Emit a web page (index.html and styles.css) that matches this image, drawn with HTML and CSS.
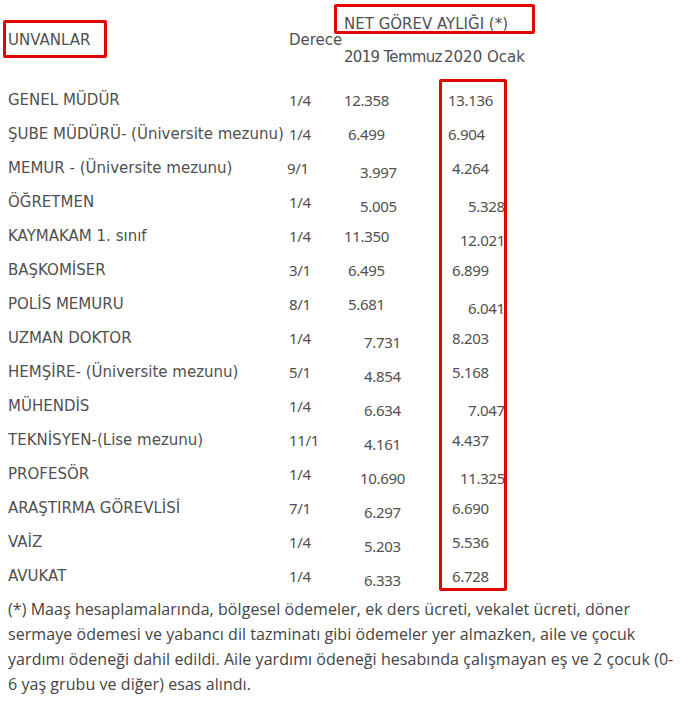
FILE: index.html
```html
<!DOCTYPE html>
<html lang="tr">
<head>
<meta charset="utf-8">
<title>Net Görev Aylığı</title>
<link rel="stylesheet" href="styles.css">
</head>
<body>
<div class="page">
  <div class="head">
    <div class="h-title">UNVANLAR</div>
    <div class="h-derece">Derece</div>
    <div class="h-net">NET GÖREV AYLIĞI (*)</div>
    <div class="h-y1">2019 Temmuz</div>
    <div class="h-y2">2020 Ocak</div>
  </div>
  <div class="rows">
    <div class="t">GENEL MÜDÜR</div><div class="d">1/4</div><div class="n a0">12.358</div><div class="n b4">13.136</div>
    <div class="t">ŞUBE MÜDÜRÜ- (Üniversite mezunu)</div><div class="d">1/4</div><div class="n a4">6.499</div><div class="n b4">6.904</div>
    <div class="t">MEMUR - (Üniversite mezunu)</div><div class="d r">9/1</div><div class="n a16 lo">3.997</div><div class="n b8">4.264</div>
    <div class="t">ÖĞRETMEN</div><div class="d">1/4</div><div class="n a16 lo">5.005</div><div class="n b24 lo">5.328</div>
    <div class="t">KAYMAKAM 1. sınıf</div><div class="d">1/4</div><div class="n a0">11.350</div><div class="n b16 lo">12.021</div>
    <div class="t">BAŞKOMİSER</div><div class="d">3/1</div><div class="n a4">6.495</div><div class="n b8">6.899</div>
    <div class="t">POLİS MEMURU</div><div class="d">8/1</div><div class="n a4">5.681</div><div class="n b24 lo">6.041</div>
    <div class="t">UZMAN DOKTOR</div><div class="d">1/4</div><div class="n a20 lo">7.731</div><div class="n b8">8.203</div>
    <div class="t">HEMŞİRE- (Üniversite mezunu)</div><div class="d">5/1</div><div class="n a20 lo">4.854</div><div class="n b8">5.168</div>
    <div class="t">MÜHENDİS</div><div class="d">1/4</div><div class="n a20 lo">6.634</div><div class="n b24 lo">7.047</div>
    <div class="t">TEKNİSYEN-(Lise mezunu)</div><div class="d">11/1</div><div class="n a20 lo">4.161</div><div class="n b8">4.437</div>
    <div class="t">PROFESÖR</div><div class="d">1/4</div><div class="n a16 lo">10.690</div><div class="n b16 lo">11.325</div>
    <div class="t">ARAŞTIRMA GÖREVLİSİ</div><div class="d">7/1</div><div class="n a20 lo">6.297</div><div class="n b8">6.690</div>
    <div class="t">VAİZ</div><div class="d">1/4</div><div class="n a20 lo">5.203</div><div class="n b8">5.536</div>
    <div class="t">AVUKAT</div><div class="d">1/4</div><div class="n a20 lo">6.333</div><div class="n b8">6.728</div>
  </div>
  <p class="note">(*) Maaş hesaplamalarında, bölgesel ödemeler, ek ders ücreti, vekalet ücreti, döner<br>sermaye ödemesi ve yabancı dil tazminatı gibi ödemeler yer almazken, aile ve çocuk<br>yardımı ödeneği dahil edildi. Aile yardımı ödeneği hesabında çalışmayan eş ve 2 çocuk (0-<br>6 yaş grubu ve diğer) esas alındı.</p>

  <div class="mark mark-title"></div>
  <div class="mark mark-net"></div>
  <div class="mark mark-col"></div>
</div>
</body>
</html>
```

FILE: styles.css
```css
html, body {
  margin: 0;
  padding: 0;
  background: #ffffff;
}

.page {
  position: relative;
  padding: 8px;
  color: #505050;
  font-family: "DejaVu Sans", "Noto Sans", sans-serif;
  font-size: 15px;
}

.head {
  display: grid;
  grid-template-columns: 281px 55px 100px 1fr;
  grid-template-rows: 28px 36px;
}

.h-title {
  grid-column: 1;
  grid-row: 1 / 3;
  align-self: center;
  line-height: 20px;
}

.h-derece {
  grid-column: 2;
  grid-row: 1 / 3;
  align-self: center;
  line-height: 20px;
  white-space: nowrap;
}

.h-net {
  grid-column: 3 / 5;
  grid-row: 1;
  line-height: 28px;
  padding-top: 2px;
  white-space: nowrap;
}

.h-y1 {
  grid-column: 3;
  grid-row: 2;
  align-self: end;
  line-height: 30px;
  letter-spacing: -0.7px;
  white-space: nowrap;
}

.h-y2 {
  grid-column: 4;
  grid-row: 2;
  align-self: end;
  line-height: 30px;
  white-space: nowrap;
}

.rows {
  display: grid;
  grid-template-columns: 281px 55px 100px 1fr;
  grid-auto-rows: 34px;
  margin-top: 11px;
  line-height: 34px;
}

.t {
  white-space: nowrap;
}

.d,
.n {
  font-family: "Noto Sans", "DejaVu Sans", sans-serif;
  letter-spacing: -0.3px;
  white-space: nowrap;
}

.d.r {
  margin-left: -2px;
}

.lo { padding-top: 4px; }

.a0 { padding-left: 0; }
.a4 { padding-left: 4px; }
.a16 { padding-left: 16px; }
.a20 { padding-left: 20px; }

.b4 { padding-left: 4px; }
.b8 { padding-left: 8px; }
.b16 { padding-left: 16px; }
.b24 { padding-left: 24px; }

.note {
  margin: 4px 0 0;
  font-family: "Open Sans", "Noto Sans", sans-serif;
  font-size: 16px;
  letter-spacing: 0.06px;
  line-height: 25px;
  color: #444444;
  white-space: nowrap;
}

.mark {
  position: absolute;
  box-sizing: border-box;
  border: 3px solid #e10600;
  border-radius: 2px;
}

.mark-title {
  left: 3px;
  top: 20px;
  width: 104px;
  height: 38px;
}

.mark-net {
  left: 334px;
  top: 4px;
  width: 201px;
  height: 30px;
}

.mark-col {
  left: 439px;
  top: 79px;
  width: 68px;
  height: 512px;
}
```
